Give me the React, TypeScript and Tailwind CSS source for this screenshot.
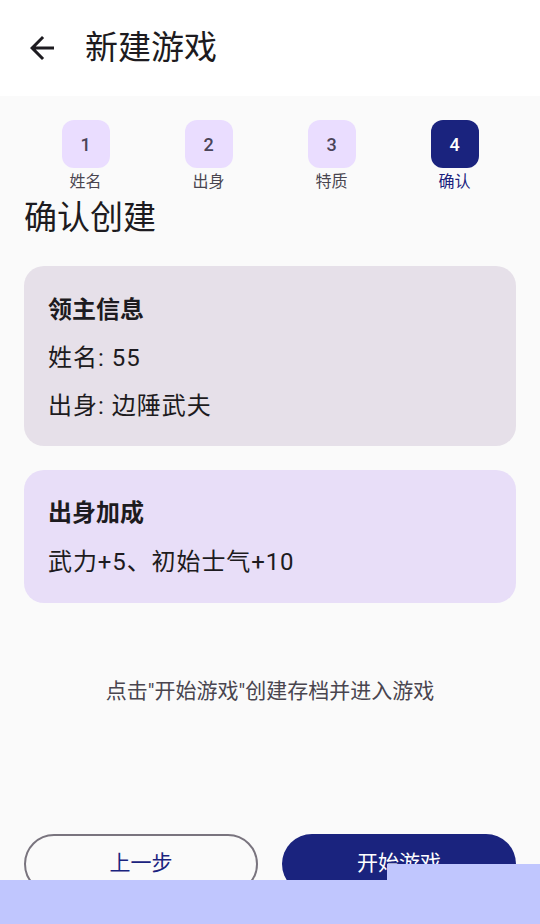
const font = { fontFamily: '"Roboto", "Noto Sans CJK SC", sans-serif' };

const steps = [
  { n: 1, label: "姓名" },
  { n: 2, label: "出身" },
  { n: 3, label: "特质" },
  { n: 4, label: "确认" },
];

const current = 4;

function BackIcon() {
  return (
    <svg width="36" height="36" viewBox="0 0 24 24" fill="#1d1b20">
      <path d="M20 11H7.83l5.59-5.59L12 4l-8 8 8 8 1.41-1.41L7.83 13H20v-2z" />
    </svg>
  );
}

export default function App() {
  return (
    <div
      className="relative flex h-[924px] w-[540px] flex-col overflow-hidden bg-[#fafafa] font-['Roboto','Noto_Sans_CJK_SC',sans-serif]"
      style={font}
    >
      <header className="flex h-[96px] items-center bg-white pl-6">
        <button type="button" aria-label="返回" className="flex h-9 w-9 items-center justify-center">
          <BackIcon />
        </button>
        <h1 className="ml-[25px] text-[33px] leading-[40px] text-[#1d1b20]">新建游戏</h1>
      </header>

      <main className="flex flex-1 flex-col px-6">
        <div className="grid grid-cols-4 pt-6">
          {steps.map((s) => {
            const active = s.n === current;
            return (
              <div key={s.n} className="flex flex-col items-center">
                <div
                  className={
                    active
                      ? "flex h-12 w-12 items-center justify-center rounded-[12px] bg-[#1a237e] text-[18px] font-medium text-white"
                      : "flex h-12 w-12 items-center justify-center rounded-[12px] bg-[#eaddff] text-[18px] font-medium text-[#4a4458]"
                  }
                >
                  {s.n}
                </div>
                <span
                  className={
                    active
                      ? "mt-0.5 text-[16px] leading-[24px] text-[#1a237e]"
                      : "mt-0.5 text-[16px] leading-[24px] text-[#49454f]"
                  }
                >
                  {s.label}
                </span>
              </div>
            );
          })}
        </div>

        <h2 className="mt-[4px] text-[33px] leading-[40px] text-[#1d1b20]">确认创建</h2>

        <section className="mt-7 flex flex-col gap-3 rounded-[20px] bg-[#e6e0e9] px-6 pb-[22px] pt-[26px]">
          <h3 className="text-[24px] font-bold leading-[36px] text-[#1d1b20]">领主信息</h3>
          <p className="text-[24px] leading-[36px] tracking-[1px] text-[#1d1b20]">姓名: 55</p>
          <p className="text-[24px] leading-[36px] tracking-[1px] text-[#1d1b20]">出身: 边陲武夫</p>
        </section>

        <section className="mt-6 flex flex-col gap-[13px] rounded-[20px] bg-[#e8def8] px-6 pb-[23px] pt-[25px]">
          <h3 className="text-[24px] font-bold leading-[36px] text-[#1d1b20]">出身加成</h3>
          <p className="text-[24px] leading-[36px] tracking-[0.9px] text-[#1d1b20]">武力+5、初始士气+10</p>
        </section>

        <p className="mt-[73px] text-center text-[21px] leading-[30px] text-[#49454f]">
          点击"开始游戏"创建存档并进入游戏
        </p>

        <div className="mt-auto grid grid-cols-2 gap-6 pb-[30px]">
          <button
            type="button"
            className="h-[60px] rounded-full border-2 border-[#79747e] text-[21px] text-[#1a237e]"
          >
            上一步
          </button>
          <button type="button" className="h-[60px] rounded-full bg-[#1a237e] text-[21px] text-white">
            开始游戏
          </button>
        </div>
      </main>

      <div className="absolute left-[387px] right-0 top-[864px] h-4 bg-[#c0c6fe]" />
      <div className="absolute bottom-0 left-0 right-0 top-[880px] bg-[#c0c6fe]" />
    </div>
  );
}
